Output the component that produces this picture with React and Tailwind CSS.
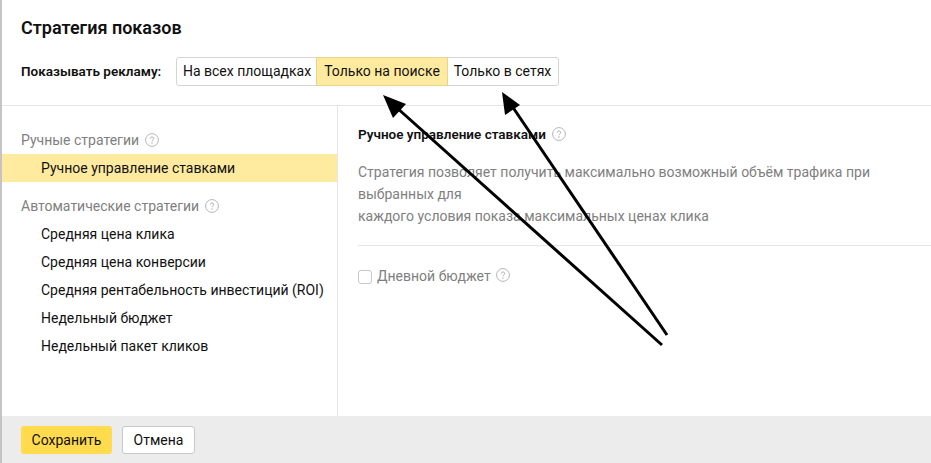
const Hint = ({ className = "" }) => (
  <svg viewBox="0 0 14 14" className={`w-[14px] h-[14px] shrink-0 ${className}`} fill="none">
    <circle cx="7" cy="7" r="6.4" stroke="#b5b5b5" strokeWidth="1" />
    <path d="M5.3 5.6c0-1 .8-1.6 1.7-1.6s1.7.6 1.7 1.5c0 1.3-1.7 1.4-1.7 2.7" stroke="#a8a8a8" strokeWidth="1" />
    <circle cx="7" cy="10" r=".7" fill="#a8a8a8" />
  </svg>
);

const autoItems = [
  "Средняя цена клика",
  "Средняя цена конверсии",
  "Средняя рентабельность инвестиций (ROI)",
  "Недельный бюджет",
  "Недельный пакет кликов",
];

export default function App() {
  return (
    <div className="relative w-[931px] h-[463px] overflow-hidden bg-white flex flex-col border-l-2 border-[#c4c4c4] text-[14px] text-[#111] font-['Roboto',sans-serif]">
      {/* шапка */}
      <div className="h-[106px] shrink-0 border-b border-[#e6e6e6] pl-[19px] pt-[16px]">
        <div className="text-[18px] leading-[24px] font-semibold">Стратегия показов</div>
        <div className="flex items-center mt-[17px]">
          <div className="w-[155px] text-[13.5px] font-semibold">Показывать рекламу:</div>
          <div className="flex h-[29px] rounded-[3px] border border-[#d5d5d5] leading-[27px]">
            <div className="w-[140px] text-center">На всех площадках</div>
            <div className="w-[130px] text-center bg-[#ffeba0] outline outline-[#e8d48c]">Только на поиске</div>
            <div className="w-[111px] text-center">Только в сетях</div>
          </div>
        </div>
      </div>

      <div className="flex flex-1">
        {/* левая колонка */}
        <div className="w-[336px] shrink-0 border-r border-[#e6e6e6] pt-[24px]">
          <div className="flex items-center gap-[6px] pl-[19px] h-[20px] text-[#808080]">
            Ручные стратегии <Hint />
          </div>
          <div className="mt-[4px] h-[28px] leading-[28px] pl-[39px] bg-[#ffeba0]">Ручное управление ставками</div>
          <div className="flex items-center gap-[6px] pl-[19px] h-[20px] mt-[14px] text-[#808080]">
            Автоматические стратегии <Hint />
          </div>
          <div className="mt-[4px]">
            {autoItems.map((item) => (
              <div key={item} className="h-[28px] leading-[28px] pl-[39px]">{item}</div>
            ))}
          </div>
        </div>

        {/* правая колонка */}
        <div className="flex-1 pt-[18px] pl-[20px]">
          <div className="flex items-center gap-[6px] h-[20px] text-[13.5px] font-semibold">
            Ручное управление ставками <Hint />
          </div>
          <div className="mt-[17px] text-[#808080] leading-[22px] pb-[18px] border-b border-[#e6e6e6]">
            Стратегия позволяет получить максимально возможный объём трафика при выбранных для
            <br />
            каждого условия показа максимальных ценах клика
          </div>
          <div className="flex items-center mt-[20px] text-[#808080]">
            <div className="w-[14px] h-[14px] rounded-[3px] border border-[#c8c8c8] mr-[5px]"></div>
            <span>Дневной бюджет</span>
            <Hint className="ml-[5px] -mt-[4px]" />
          </div>
        </div>
      </div>

      {/* подвал */}
      <div className="h-[47px] shrink-0 bg-[#ececec] flex items-center pl-[19px] gap-[10px]">
        <div className="w-[91px] h-[28px] rounded-[3px] bg-[#ffdb4d] text-center leading-[28px]">Сохранить</div>
        <div className="w-[73px] h-[28px] rounded-[3px] bg-white border border-[#c8c8c8] text-center leading-[26px]">Отмена</div>
      </div>

      {/* стрелки поверх скриншота */}
      <svg className="absolute left-[-2px] top-0 w-[931px] h-[463px] pointer-events-none" viewBox="0 0 931 463">
        <path d="M662 345 L396 107" stroke="#000" strokeWidth="3" />
        <path d="M383 95 L406 104 L393 118 Z" fill="#000" />
        <path d="M667 335 L512 106" stroke="#000" strokeWidth="3" />
        <path d="M502 92 L520 105 L505 115 Z" fill="#000" />
      </svg>
    </div>
  );
}
